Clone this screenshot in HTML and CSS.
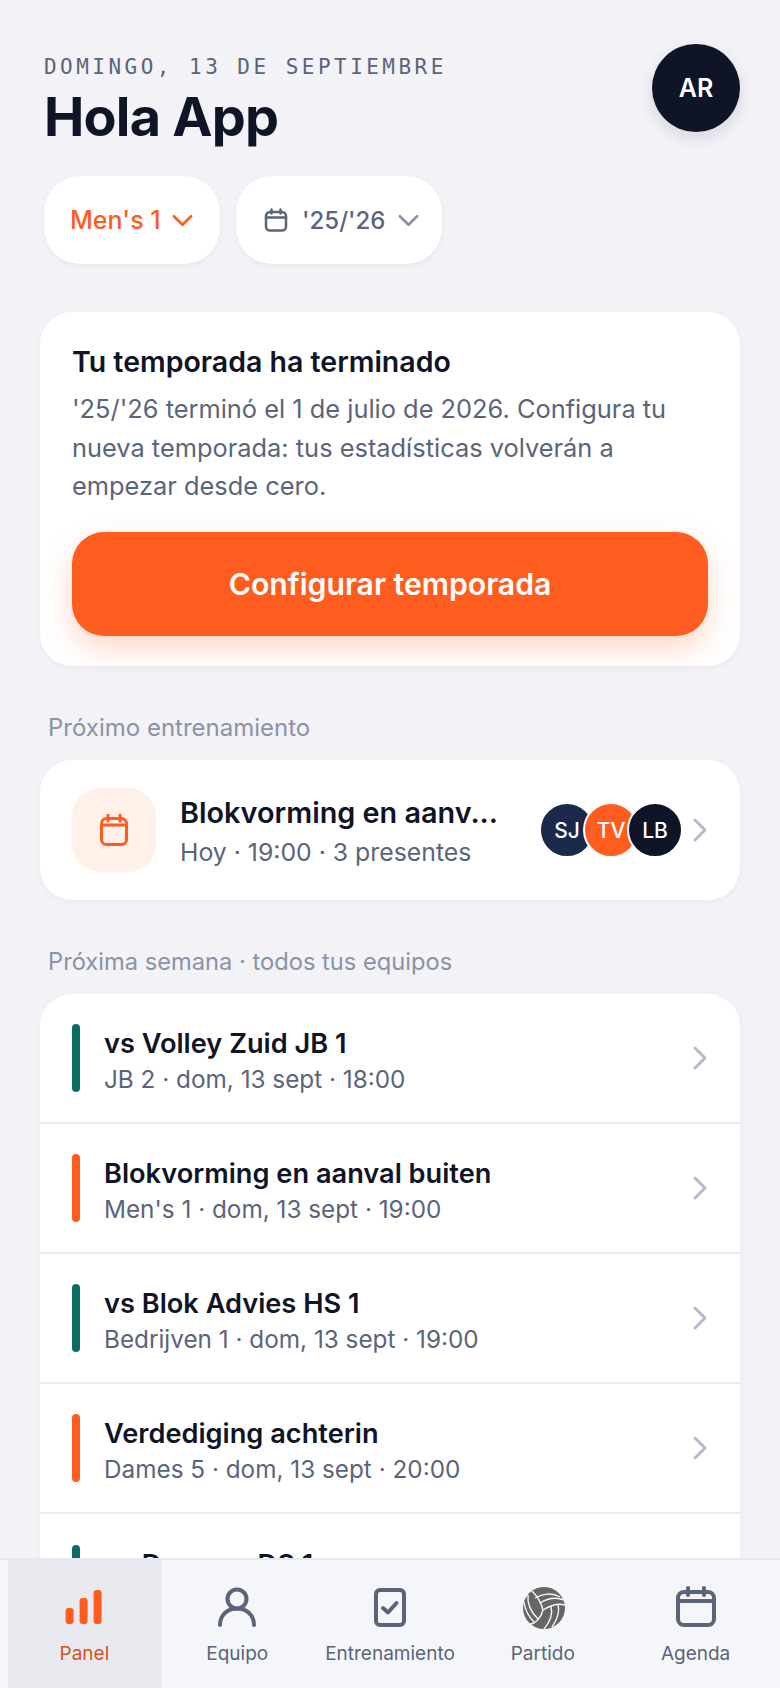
FILE: index.html
```html
<!DOCTYPE html>
<html lang="es">
<head>
  <meta charset="UTF-8">
  <meta name="viewport" content="width=device-width, initial-scale=1.0">
  <title>Panel</title>
  <link rel="stylesheet" href="styles.css">
</head>
<body>
  <div class="app">
    <main class="content">
      <header class="top">
        <div>
          <div class="date">DOMINGO, 13 DE SEPTIEMBRE</div>
          <h1>Hola App</h1>
        </div>
        <div class="avatar-main">AR</div>
      </header>

      <div class="filters">
        <button class="pill pill-team">Men's 1
          <svg class="chev" viewBox="0 0 24 24"><path d="M3 7.5l9 9 9-9"/></svg>
        </button>
        <button class="pill pill-season">
          <svg class="pill-cal" viewBox="0 0 24 24"><rect x="2" y="4" width="20" height="18.5" rx="4"/><path d="M7.5 1.5v4M16.5 1.5v4M2 9.5h20"/></svg>
          <span>'25/'26</span>
          <svg class="chev" viewBox="0 0 24 24"><path d="M3 7.5l9 9 9-9"/></svg>
        </button>
      </div>

      <section class="card notice">
        <h2>Tu temporada ha terminado</h2>
        <p>'25/'26 terminó el 1 de julio de 2026. Configura tu nueva temporada: tus estadísticas volverán a empezar desde cero.</p>
        <button class="cta">Configurar temporada</button>
      </section>

      <div class="label label-next">Próximo entrenamiento</div>
      <section class="card next">
        <div class="next-icon">
          <svg viewBox="0 0 28 32"><rect x="1.5" y="4.5" width="25" height="26" rx="5"/><path d="M8 1v6M20 1v6M1.5 11h25"/></svg>
        </div>
        <div class="next-text">
          <div class="row-title">Blokvorming en aanv...</div>
          <div class="row-sub">Hoy · 19:00 · 3 presentes</div>
        </div>
        <div class="faces">
          <span class="face face-navy">SJ</span>
          <span class="face face-orange">TV</span>
          <span class="face face-dark">LB</span>
        </div>
        <svg class="arrow" viewBox="0 0 14 24"><path d="M2 2l10 10-10 10"/></svg>
      </section>

      <div class="label label-week">Próxima semana · todos tus equipos</div>
      <section class="card week">
        <div class="row">
          <span class="bar bar-green"></span>
          <div class="row-text">
            <div class="row-title">vs Volley Zuid JB 1</div>
            <div class="row-sub">JB 2 · dom, 13 sept · 18:00</div>
          </div>
          <svg class="arrow" viewBox="0 0 14 24"><path d="M2 2l10 10-10 10"/></svg>
        </div>
        <div class="row">
          <span class="bar bar-orange"></span>
          <div class="row-text">
            <div class="row-title">Blokvorming en aanval buiten</div>
            <div class="row-sub">Men's 1 · dom, 13 sept · 19:00</div>
          </div>
          <svg class="arrow" viewBox="0 0 14 24"><path d="M2 2l10 10-10 10"/></svg>
        </div>
        <div class="row">
          <span class="bar bar-green"></span>
          <div class="row-text">
            <div class="row-title">vs Blok Advies HS 1</div>
            <div class="row-sub">Bedrijven 1 · dom, 13 sept · 19:00</div>
          </div>
          <svg class="arrow" viewBox="0 0 14 24"><path d="M2 2l10 10-10 10"/></svg>
        </div>
        <div class="row">
          <span class="bar bar-orange"></span>
          <div class="row-text">
            <div class="row-title">Verdediging achterin</div>
            <div class="row-sub">Dames 5 · dom, 13 sept · 20:00</div>
          </div>
          <svg class="arrow" viewBox="0 0 14 24"><path d="M2 2l10 10-10 10"/></svg>
        </div>
        <div class="row">
          <span class="bar bar-green"></span>
          <div class="row-text">
            <div class="row-title">vs Dynamo DS 1</div>
            <div class="row-sub"></div>
          </div>
        </div>
      </section>
    </main>

    <nav class="tabs">
      <div class="tab active">
        <svg class="tab-icon" viewBox="0 0 44 44"><rect x="3.6" y="22" width="8" height="16" rx="3"/><rect x="17.6" y="12" width="8" height="26" rx="3"/><rect x="31.6" y="4" width="8" height="34" rx="3"/></svg>
        <span>Panel</span>
      </div>
      <div class="tab">
        <svg class="tab-icon line" viewBox="0 0 44 44"><circle cx="22" cy="13" r="9.5"/><path d="M5 39c0-10 7.5-16.5 17-16.5s17 6.500 17 16.500"/></svg>
        <span>Equipo</span>
      </div>
      <div class="tab">
        <svg class="tab-icon line" viewBox="0 0 44 44"><rect x="8" y="4" width="28" height="35" rx="4"/><path d="M15 22l5 4.500 8.500-9.500"/></svg>
        <span>Entrenamiento</span>
      </div>
      <div class="tab">
        <svg class="tab-icon" viewBox="0 0 44 44">
          <circle class="ball" cx="23" cy="22" r="21"/>
          <g class="seams">
            <path d="M22 24C20 16 15 9 11 5"/>
            <path d="M22 24C30 19 37 17 44 19"/>
            <path d="M22 24C20 32 14 38 9 38"/>
            <path d="M14 12C21 8 31 6 39 11"/>
            <path d="M19 17C27 12 35 11 43 14"/>
            <path d="M7 9C6 18 10 26 17 33"/>
            <path d="M3 16C4 24 7 30 13 36"/>
            <path d="M30 20C32 28 29 36 23 43"/>
            <path d="M37 18C39 26 36 34 31 41"/>
          </g>
        </svg>
        <span>Partido</span>
      </div>
      <div class="tab">
        <svg class="tab-icon line" viewBox="0 0 44 44"><rect x="4" y="6" width="36" height="33" rx="6"/><path d="M14 2v7M30 2v7M4 15h36"/></svg>
        <span>Agenda</span>
      </div>
    </nav>
  </div>
</body>
</html>
```

FILE: styles.css
```css
/* Panel */
* {
  box-sizing: border-box;
}

html, body {
  margin: 0;
  padding: 0;
  height: 100%;
}

body {
  font-family: Inter, "Noto Sans", sans-serif;
  background-color: #f2f2f7;
  color: #0f1426;
}

button {
  font-family: inherit;
  border: none;
  cursor: pointer;
}

.app {
  display: flex;
  flex-direction: column;
  height: 1688px;
  overflow: hidden;
}

.content {
  flex: 1;
  min-height: 0;
  overflow: hidden;
  padding: 44px 40px 0;
}

.top {
  display: flex;
  justify-content: space-between;
  align-items: flex-start;
}

.date {
  font-family: "DejaVu Sans Mono", monospace;
  font-size: 21px;
  line-height: 26px;
  letter-spacing: 3.47px;
  color: #5b6479;
  margin: 10px 0 0 4px;
}

h1 {
  font-size: 54px;
  line-height: 62px;
  font-weight: 700;
  letter-spacing: -0.8px;
  margin: 6px 0 0 4px;
}

.avatar-main {
  width: 88px;
  height: 88px;
  border-radius: 50%;
  background-color: #0f1426;
  color: #fff;
  font-size: 25px;
  font-weight: 600;
  display: flex;
  align-items: center;
  justify-content: center;
  box-shadow: 0 6px 16px rgba(15, 20, 38, 0.12);
}

.filters {
  display: flex;
  gap: 16px;
  margin: 28px 0 0 4px;
}

.pill {
  height: 88px;
  border-radius: 36px;
  background-color: #fff;
  font-size: 25px;
  font-weight: 500;
  display: flex;
  align-items: center;
  box-shadow: 0 2px 6px rgba(15, 20, 38, 0.05);
}

.pill-team {
  width: 176px;
  padding: 0 0 0 26px;
  gap: 10px;
  color: #ff5c20;
}

.pill-season {
  width: 206px;
  padding: 0 0 0 28px;
  gap: 12px;
  font-size: 24px;
  color: #5b6479;
}

.pill-season span {
  margin-left: 2px;
}

.chev {
  width: 23px;
  height: 23px;
  fill: none;
  stroke: currentColor;
  stroke-width: 2.8;
  stroke-linecap: round;
  stroke-linejoin: round;
}

.pill-season .chev {
  stroke: #8b93a7;
}

.pill-cal {
  width: 24px;
  height: 24px;
  fill: none;
  stroke: #5b6479;
  stroke-width: 2.5;
  stroke-linecap: round;
}

.card {
  background-color: #fff;
  border-radius: 32px;
  box-shadow: 0 2px 6px rgba(15, 20, 38, 0.04);
}

.notice {
  margin-top: 48px;
  height: 354px;
  padding: 34px 32px 0;
}

.notice h2 {
  font-size: 28.5px;
  line-height: 32px;
  font-weight: 600;
  margin: 0;
}

.notice p {
  font-size: 25.4px;
  line-height: 38.5px;
  color: #5b6479;
  margin: 12px 0 0;
}

.cta {
  display: block;
  width: 100%;
  height: 104px;
  margin-top: 26px;
  border-radius: 32px;
  background-color: #ff5c20;
  color: #fff;
  font-size: 30.2px;
  font-weight: 600;
  box-shadow: 0 12px 28px rgba(255, 92, 32, 0.25);
}

.label {
  font-size: 24px;
  line-height: 30px;
  color: #8b93a7;
  padding-left: 8px;
}

.label-next {
  margin-top: 47px;
}

.label-week {
  margin-top: 47px;
  font-size: 23.7px;
}

.next {
  margin-top: 17px;
  height: 140px;
  padding: 0 33px 0 32px;
  display: flex;
  align-items: center;
}

.next-icon {
  width: 84px;
  height: 84px;
  border-radius: 28px;
  background-color: #fff0e8;
  display: flex;
  align-items: center;
  justify-content: center;
  flex-shrink: 0;
}

.next-icon svg {
  width: 28px;
  height: 32px;
  fill: none;
  stroke: #ff5c20;
  stroke-width: 3;
  stroke-linecap: round;
}

.next-text {
  flex: 1;
  min-width: 0;
  margin-left: 24px;
  padding-top: 4px;
}

.next-text .row-title {
  font-size: 28.8px;
}

.row-title {
  font-size: 27.2px;
  line-height: 34px;
  font-weight: 600;
  white-space: nowrap;
}

.row-sub {
  font-size: 24.8px;
  line-height: 32px;
  color: #5b6479;
  margin-top: 6px;
}

.faces {
  display: flex;
  margin-right: 10px;
}

.face {
  width: 56px;
  height: 56px;
  border-radius: 50%;
  border: 2px solid #fff;
  color: #fff;
  font-size: 21px;
  font-weight: 500;
  display: flex;
  align-items: center;
  justify-content: center;
  margin-left: -12px;
}

.face-navy {
  background-color: #1b2a4a;
}

.face-orange {
  background-color: #ff5c20;
}

.face-dark {
  background-color: #0f1426;
}

.arrow {
  width: 14px;
  height: 24px;
  flex-shrink: 0;
  fill: none;
  stroke: #b4bbc9;
  stroke-width: 3;
  stroke-linecap: round;
  stroke-linejoin: round;
}

.label-week + .week {
  margin-top: 17px;
}

.row {
  height: 130px;
  padding: 0 33px 0 32px;
  display: flex;
  align-items: center;
  border-bottom: 2px solid #ebebf0;
}

.row:last-child {
  border-bottom: none;
}

.bar {
  width: 8px;
  height: 68px;
  border-radius: 4px;
  flex-shrink: 0;
}

.bar-green {
  background-color: #0b6e63;
}

.bar-orange {
  background-color: #ff5c20;
}

.row-text {
  flex: 1;
  min-width: 0;
  margin-left: 24px;
  padding-top: 4px;
}

.row-text .row-sub {
  font-size: 24.3px;
  line-height: 30px;
  min-height: 30px;
  margin-top: 3px;
}

.tabs {
  flex-shrink: 0;
  height: 130px;
  padding: 0 8px;
  background-color: #f5f6fa;
  border-top: 2px solid #e8e8ee;
  display: flex;
}

.tab {
  flex: 1 1 0;
  min-width: 0;
  padding-top: 26px;
  display: flex;
  flex-direction: column;
  align-items: center;
  font-size: 19px;
  color: #5b6479;
}

.tab span {
  margin-top: 12px;
  white-space: nowrap;
}

.tab.active {
  background-color: #e8e9ee;
  color: #d9501f;
}

.tab-icon {
  width: 44px;
  height: 44px;
  fill: #ff5c20;
}

.tab-icon.line {
  fill: none;
  stroke: #5b6479;
  stroke-width: 4;
  stroke-linecap: round;
  stroke-linejoin: round;
}

.ball {
  fill: #666;
}

.seams path {
  fill: none;
  stroke: #f5f6fa;
  stroke-width: 1.4;
}
```
